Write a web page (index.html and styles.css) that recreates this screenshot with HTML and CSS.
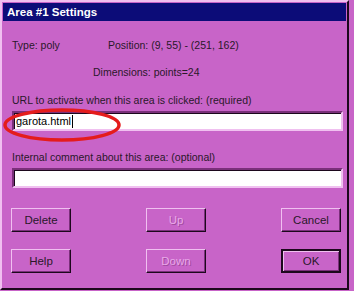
FILE: index.html
```html
<!DOCTYPE html>
<html lang="en">
<head>
    <meta charset="UTF-8">
    <title>Area #1 Settings</title>
    <link rel="stylesheet" href="styles.css">
</head>
<body>
    <div class="dialog">
        <div class="dialog-title">Area #1 Settings</div>
        <div class="dialog-body">
            <div class="info-row">
                <span class="info-type">Type: poly</span>
                <span class="info-pos">Position: (9, 55) - (251, 162)</span>
            </div>
            <div class="info-dim">Dimensions: points=24</div>

            <label class="field-label">URL to activate when this area is clicked: (required)</label>
            <div class="field"><span class="field-value">garota.html</span><span class="caret"></span></div>

            <label class="field-label second">Internal comment about this area: (optional)</label>
            <div class="field"></div>

            <div class="buttons">
                <button class="btn">Delete</button>
                <button class="btn" disabled>Up</button>
                <button class="btn">Cancel</button>
                <button class="btn">Help</button>
                <button class="btn" disabled>Down</button>
                <button class="btn default">OK</button>
            </div>
        </div>

        <svg class="mark" width="122" height="36" viewBox="0 0 122 36">
            <ellipse cx="60" cy="17" rx="57" ry="15" fill="none" stroke="#e41c1c" stroke-width="3.5"/>
        </svg>
    </div>
</body>
</html>
```

FILE: styles.css
```css
:root {
    --face: #c864c8;
    --light: #f0c0f0;
    --shadow: #7a307a;
    --dark: #1c081c;
    --title: #0c0c78;
    --text: #2a182a;
}

body {
    margin: 0;
    background: var(--face);
    font-family: "Liberation Sans", Arial, sans-serif;
    font-size: 10.5px;
    color: var(--text);
}

.dialog {
    position: relative;
    width: 343px;
    height: 284px;
    padding: 1px;
    border: 2px solid;
    border-color: var(--light) var(--dark) var(--dark) var(--light);
    background: var(--face);
}

.dialog-title {
    height: 18px;
    line-height: 18px;
    padding-left: 4px;
    background: var(--title);
    color: #ffffff;
    font-weight: bold;
    font-size: 11.5px;
}

.dialog-body {
    padding: 0 5px 0 9px;
}

.info-row {
    display: flex;
    margin-top: 18px;
    line-height: 13px;
}

.info-type {
    width: 96px;
}

.info-dim {
    margin-top: 14px;
    margin-left: 81px;
    line-height: 13px;
}

.field-label {
    display: block;
    margin-top: 15px;
    line-height: 13px;
}

.field-label.second {
    margin-top: 20px;
}

.field {
    display: flex;
    align-items: center;
    width: 325px;
    height: 16px;
    margin-top: 4px;
    padding-left: 2px;
    border: 2px solid;
    border-color: var(--shadow) var(--light) var(--light) var(--shadow);
    box-shadow: inset 1px 1px 0 var(--dark);
    background: #ffffff;
    font-size: 11px;
    color: #000000;
}

.caret {
    width: 1px;
    height: 13px;
    margin-left: 1px;
    background: #000000;
}

.buttons {
    display: grid;
    grid-template-columns: repeat(3, 60px);
    justify-content: space-between;
    row-gap: 17px;
    width: 330px;
    margin-top: 20px;
    margin-left: -1px;
}

.btn {
    height: 24px;
    padding: 0;
    border: 1px solid;
    border-color: var(--light) var(--dark) var(--dark) var(--light);
    box-shadow: inset -1px -1px 0 var(--shadow);
    background: var(--face);
    font-family: "Liberation Sans", Arial, sans-serif;
    font-size: 11.5px;
    color: var(--text);
}

.btn:disabled {
    color: #e8a8e8;
    text-shadow: 1px 1px 0 #a04aa0;
}

.btn.default {
    border: 2px solid var(--dark);
    box-shadow: inset 1px 1px 0 var(--light), inset -1px -1px 0 var(--shadow);
}

.mark {
    position: absolute;
    left: 0;
    top: 106px;
}
```
